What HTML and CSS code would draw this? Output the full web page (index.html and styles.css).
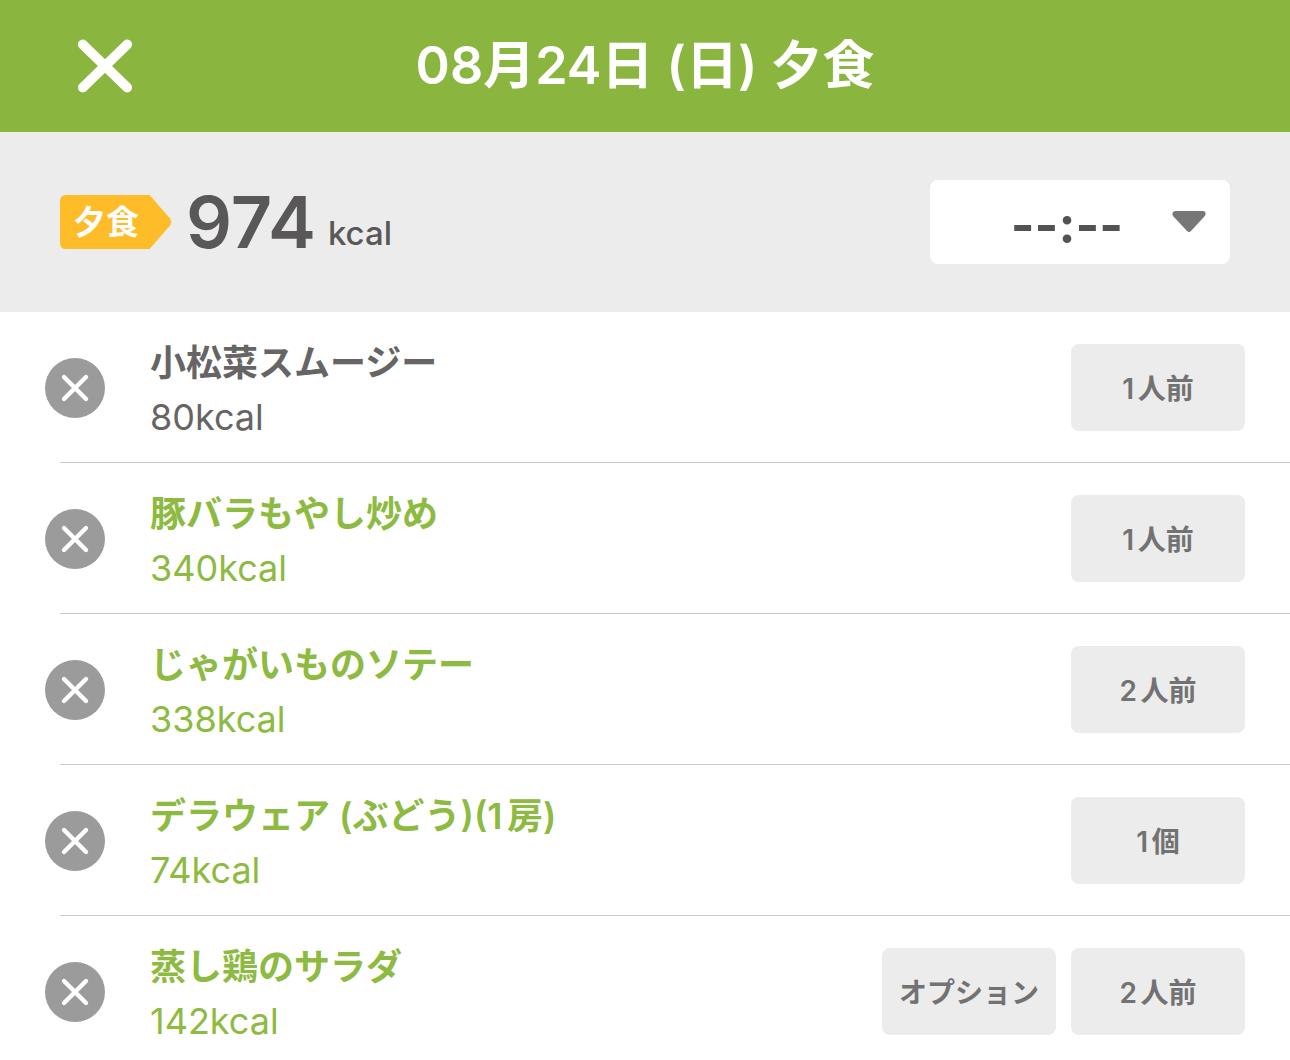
FILE: index.html
```html
<!DOCTYPE html>
<html lang="ja">
<head>
<meta charset="utf-8">
<meta name="viewport" content="width=device-width, initial-scale=1">
<title>08月24日(日) 夕食</title>
<link rel="stylesheet" href="styles.css">
</head>
<body>
<svg class="sprite" aria-hidden="true">
  <symbol id="remove-icon" viewBox="0 0 60 60">
    <circle cx="30" cy="30" r="30" fill="#9b9b9b"/>
    <path d="M19 19 41 41M41 19 19 41" fill="none" stroke="#fff" stroke-width="4.4" stroke-linecap="round"/>
  </symbol>
</svg>

<header class="topbar">
  <button class="close" type="button" aria-label="閉じる">
    <svg width="56" height="54" viewBox="0 0 56 54" aria-hidden="true">
      <path d="M5.8 5.500 50.200 48.500M50.200 5.500 5.800 48.500" fill="none" stroke="#fff" stroke-width="9.800" stroke-linecap="round"/>
    </svg>
  </button>
  <h1 class="title">08月24日 (日) 夕食</h1>
</header>

<section class="summary">
  <span class="tag">
    <svg class="tag-shape" viewBox="0 0 112 54" aria-hidden="true">
      <path d="M6 0H89.500L110.500 24Q112 27 110.500 30L89.500 54H6Q0 54 0 48V6Q0 0 6 0Z" fill="#ffbc29"/>
    </svg>
    <span class="tag-text">夕食</span>
  </span>
  <p class="total"><strong class="total-value">974</strong><span class="total-unit">kcal</span></p>
  <div class="time">
    <select class="time-select" aria-label="食事時間">
      <option>--:--</option>
    </select>
    <svg class="time-arrow" width="34" height="22" viewBox="0 0 34 22" aria-hidden="true">
      <path d="M3 0H31Q34 0 33.500 3.500L32.800 5 19 20Q17 22 15 20L1 5Q-1 1 3 0Z" fill="#777"/>
    </svg>
  </div>
</section>

<ul class="meals">
  <li class="meal">
    <button class="remove" type="button" aria-label="小松菜スムージーを削除"><svg width="60" height="60" aria-hidden="true"><use href="#remove-icon"/></svg></button>
    <div class="meal-body">
      <div class="meal-text"><h2 class="meal-name">小松菜スムージー</h2><p class="meal-kcal">80kcal</p></div>
      <button class="chip" type="button">1人前</button>
    </div>
  </li>
  <li class="meal meal-linked">
    <button class="remove" type="button" aria-label="豚バラもやし炒めを削除"><svg width="60" height="60" aria-hidden="true"><use href="#remove-icon"/></svg></button>
    <div class="meal-body">
      <div class="meal-text"><h2 class="meal-name">豚バラもやし炒め</h2><p class="meal-kcal">340kcal</p></div>
      <button class="chip" type="button">1人前</button>
    </div>
  </li>
  <li class="meal meal-linked">
    <button class="remove" type="button" aria-label="じゃがいものソテーを削除"><svg width="60" height="60" aria-hidden="true"><use href="#remove-icon"/></svg></button>
    <div class="meal-body">
      <div class="meal-text"><h2 class="meal-name">じゃがいものソテー</h2><p class="meal-kcal">338kcal</p></div>
      <button class="chip" type="button">2人前</button>
    </div>
  </li>
  <li class="meal meal-linked">
    <button class="remove" type="button" aria-label="デラウェアを削除"><svg width="60" height="60" aria-hidden="true"><use href="#remove-icon"/></svg></button>
    <div class="meal-body">
      <div class="meal-text"><h2 class="meal-name">デラウェア (ぶどう)(1房)</h2><p class="meal-kcal">74kcal</p></div>
      <button class="chip" type="button">1個</button>
    </div>
  </li>
  <li class="meal meal-linked">
    <button class="remove" type="button" aria-label="蒸し鶏のサラダを削除"><svg width="60" height="60" aria-hidden="true"><use href="#remove-icon"/></svg></button>
    <div class="meal-body">
      <div class="meal-text"><h2 class="meal-name">蒸し鶏のサラダ</h2><p class="meal-kcal">142kcal</p></div>
      <button class="chip" type="button">オプション</button>
      <button class="chip" type="button">2人前</button>
    </div>
  </li>
</ul>
</body>
</html>
```

FILE: styles.css
```css
* {
  box-sizing: border-box;
}

body {
  display: flex;
  flex-direction: column;
  height: 100vh;
  margin: 0;
  background: #fff;
  color: #666464;
  font-family: Inter, "Noto Sans CJK JP", sans-serif;
}

h1,
h2,
p,
ul {
  margin: 0;
  padding: 0;
}

button,
select {
  border: 0;
  padding: 0;
  background: none;
  color: inherit;
  font: inherit;
}

svg {
  display: block;
}

.sprite {
  display: none;
}

.topbar {
  display: grid;
  grid-template-columns: 140px 1fr 140px;
  flex: none;
  align-items: center;
  height: 132px;
  background: #8ab63f;
  color: #fff;
}

.close {
  justify-self: end;
  margin-right: 7px;
}

.title {
  font-size: 52px;
  font-weight: 600;
  line-height: 72px;
  text-align: center;
  white-space: nowrap;
}

.summary {
  display: flex;
  flex: none;
  align-items: center;
  height: 180px;
  padding: 0 60px;
  background: #ececec;
  color: #595757;
}

.tag {
  display: grid;
  width: 112px;
  height: 54px;
}

.tag-shape,
.tag-text {
  grid-area: 1 / 1;
}

.tag-text {
  padding-left: 13px;
  color: #fff;
  font-size: 33px;
  font-weight: 600;
  line-height: 54px;
}

.total {
  display: flex;
  align-items: flex-end;
  gap: 12px;
  margin-left: 14px;
}

.total-value {
  font-size: 72px;
  font-weight: 600;
  line-height: 84px;
}

.total-unit {
  font-size: 33px;
  font-weight: 500;
  line-height: 62px;
}

.time {
  display: grid;
  align-items: center;
  width: 300px;
  height: 84px;
  margin-left: auto;
}

.time-select,
.time-arrow {
  grid-area: 1 / 1;
}

.time-select {
  width: 100%;
  height: 100%;
  padding: 4px 50px 0 24px;
  border-radius: 8px;
  background: #fff;
  color: #535353;
  font-size: 51px;
  font-weight: 700;
  text-align: center;
  appearance: none;
}

.time-arrow {
  justify-self: end;
  margin-right: 24px;
  pointer-events: none;
}

.meals {
  flex: 1;
  overflow-y: auto;
  list-style: none;
  scrollbar-width: none;
}

.meal {
  display: grid;
  grid-template-columns: 45px 15px 45px 1fr;
  align-items: center;
}

.remove {
  grid-area: 1 / 2 / 2 / 4;
  z-index: 1;
}

.meal-body {
  display: flex;
  grid-area: 1 / 2 / 2 / 5;
  align-items: center;
  gap: 15px;
  height: 151px;
  margin-left: 15px;
  padding: 0 45px 0 90px;
  border-bottom: 1px solid #c8c8c8;
}

.meal:last-child .meal-body {
  border-bottom-color: transparent;
}

.meal-text {
  flex: 1;
  padding-top: 6px;
}

.meal-name {
  font-size: 36px;
  font-weight: 600;
  line-height: 54px;
  text-autospace: normal;
}

.meal-kcal {
  font-size: 36px;
  line-height: 54px;
}

.meal-linked .meal-text {
  color: #8dba40;
}

.chip {
  width: 174px;
  height: 87px;
  border-radius: 8px;
  background: #ececec;
  color: #727272;
  font-size: 28px;
  font-weight: 600;
  text-autospace: normal;
}
```
